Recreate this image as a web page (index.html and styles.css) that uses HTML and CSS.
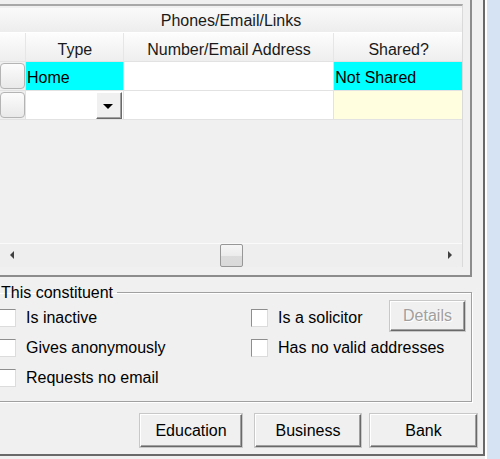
FILE: index.html
```html
<!DOCTYPE html>
<html lang="en">
<head>
  <meta charset="UTF-8">
  <title>Constituent - Phones/Email/Links</title>
  <link rel="stylesheet" href="styles.css">
</head>
<body>
  <div class="window">
    <div class="panel">
      <div class="pane">
        <div class="grid">
          <div class="band">Phones/Email/Links</div>
          <div class="row head">
            <div class="cell sel"></div>
            <div class="cell type">Type</div>
            <div class="cell num">Number/Email Address</div>
            <div class="cell shared">Shared?</div>
          </div>
          <div class="row">
            <div class="cell sel"><span class="knob"></span></div>
            <div class="cell type cyan">Home</div>
            <div class="cell num"></div>
            <div class="cell shared cyan">Not Shared</div>
          </div>
          <div class="row">
            <div class="cell sel"><span class="knob"></span></div>
            <div class="cell type"><button class="drop"><span class="tri-down"></span></button></div>
            <div class="cell num"></div>
            <div class="cell shared pale"></div>
          </div>
          <div class="empty"></div>
          <div class="hscroll">
            <div class="arrow"><span class="tri-left"></span></div>
            <div class="track"><span class="thumb"></span></div>
            <div class="arrow"><span class="tri-right"></span></div>
          </div>
        </div>
      </div>

      <fieldset class="group">
        <legend>This constituent</legend>
        <div class="opt-row">
          <label class="opt left"><span class="check"></span>Is inactive</label>
          <label class="opt"><span class="check"></span>Is a solicitor</label>
          <button class="btn details" disabled>Details</button>
        </div>
        <div class="opt-row">
          <label class="opt left"><span class="check"></span>Gives anonymously</label>
          <label class="opt"><span class="check"></span>Has no valid addresses</label>
        </div>
        <div class="opt-row">
          <label class="opt left"><span class="check"></span>Requests no email</label>
        </div>
      </fieldset>

      <div class="actions">
        <button class="btn edu">Education</button>
        <button class="btn biz">Business</button>
        <button class="btn bank">Bank</button>
      </div>
    </div>
    <div class="gutter"></div>
    <div class="side"></div>
  </div>
</body>
</html>
```

FILE: styles.css
```css
:root {
  --face: #f0f0f0;
  --shadow: #a0a0a0;
  --dark: #696969;
  --cyan: #00ffff;
  --pale: #ffffe0;
  --blue: #d6e3f3;
}
* { box-sizing: border-box; }
body {
  margin: 0;
  width: 500px;
  height: 459px;
  overflow: hidden;
  background: var(--face);
  font-family: "Liberation Sans", Arial, sans-serif;
  font-size: 16px;
  color: #000;
}
.window {
  display: flex;
  height: 459px;
}
.panel {
  flex: none;
  width: 485px;
  height: 456px;
  border-right: 2px solid var(--dark);
  border-bottom: 2px solid var(--dark);
}
.gutter { width: 2px; background: #fff; }
.side { flex: 1; background: var(--blue); }

/* grid */
.pane {
  width: 472px;
  height: 277px;
  padding-top: 4px;
  border-right: 2px solid #8c8c8c;
  border-bottom: 2px solid #8c8c8c;
}
.grid {
  width: 463px;
  height: 263px;
  display: flex;
  flex-direction: column;
  border-top: 2px solid #a8a8a8;
  border-right: 1px solid #dadada;
}
.band {
  height: 25px;
  margin-top: 2px;
  padding-top: 1px;
  line-height: 24px;
  text-align: center;
  color: #1a1a1a;
  background: linear-gradient(#fafafa, #ededed);
  border-bottom: 1px solid #fff;
}
.row {
  display: flex;
  height: 29px;
  border-bottom: 1px solid #e2e2e2;
}
.cell {
  height: 28px;
  line-height: 25px;
  padding: 3px 0 0 1px;
  background: #fff;
  border-right: 1px solid #e2e2e2;
  white-space: nowrap;
}
.head .cell {
  text-align: center;
  color: #1a1a1a;
  padding-top: 5px;
  line-height: 23px;
  background: linear-gradient(#fdfdfd, #eeeeee);
  border-right-color: #e6e6e6;
}
.cell.sel { width: 26px; background: var(--face); padding: 1px 0 0 0; }
.head .cell.sel { background: linear-gradient(#fdfdfd, #eeeeee); }
.type { width: 98px; position: relative; }
.num { width: 211px; }
.shared { width: 128px; border-right: none; }
.cyan { background: var(--cyan); }
.pale { background: var(--pale); }
.knob {
  display: block;
  width: 25px;
  height: 26px;
  border: 1px solid #b4b4b4;
  border-radius: 4px;
  background: linear-gradient(#fcfcfc, #e9e9e9);
}
.drop {
  position: absolute;
  right: 1px;
  top: 1px;
  width: 26px;
  height: 27px;
  padding: 0;
  background: var(--face);
  border: 1px solid;
  border-color: #fff var(--dark) var(--dark) #fff;
  box-shadow: inset -1px -1px 0 var(--shadow);
  display: flex;
  align-items: center;
  justify-content: center;
}
.tri-down {
  width: 0;
  height: 0;
  border-left: 5px solid transparent;
  border-right: 5px solid transparent;
  border-top: 5px solid #000;
  margin: 2px 1px 0 0;
}
.empty { flex: 1; background: var(--face); }
.hscroll {
  height: 24px;
  display: flex;
  background: linear-gradient(#fafafa 0 1px, #eeeeee 1px);
}
.arrow {
  width: 24px;
  display: flex;
  align-items: center;
  justify-content: center;
}
.tri-left, .tri-right {
  width: 0;
  height: 0;
  border-top: 4px solid transparent;
  border-bottom: 4px solid transparent;
}
.tri-left { border-right: 4px solid #404040; }
.tri-right { border-left: 4px solid #404040; }
.track { flex: 1; padding: 1px 0 0 196px; }
.thumb {
  display: block;
  width: 23px;
  height: 23px;
  border: 1px solid #979797;
  border-radius: 2px;
  background: linear-gradient(#f6f6f6 0, #ececec 50%, #dcdcdc 51%, #d9d9d9);
}

/* group box */
.group {
  width: 478px;
  margin: 7px 0 0 -6px;
  padding: 2px 6px 8px 6px;
  border: 1px solid var(--shadow);
  box-shadow: inset 1px 1px 0 #fff, 1px 1px 0 #fff;
}
.group legend {
  padding: 0 4px 0 2px;
  margin-left: -2px;
  line-height: 17px;
}
.opt-row {
  display: flex;
  align-items: center;
  height: 30px;
}
.opt {
  display: flex;
  align-items: center;
  gap: 10px;
}
.opt.left { width: 252px; margin-left: -2px; }
.check {
  width: 17px;
  height: 18px;
  background: #fff;
  border: 1px solid;
  border-color: #8e8e8e #dcdcdc #dcdcdc #8e8e8e;
}
.btn {
  font: inherit;
  color: #000;
  background: var(--face);
  height: 33px;
  padding: 0;
  border: 1px solid;
  border-color: #fff var(--dark) var(--dark) #fff;
  box-shadow: inset -1px -1px 0 var(--shadow), 0 0 0 1px #c8c8c8;
}
.details {
  margin: -5px 0 0 auto;
  width: 75px;
  height: 30px;
  color: #a0a0a0;
  text-shadow: 1px 1px 0 #fff;
}

.actions {
  display: flex;
  margin-top: 12px;
  padding-left: 140px;
}
.edu { width: 102px; }
.biz { width: 106px; margin-left: 13px; }
.bank { width: 107px; margin-left: 9px; }
```
